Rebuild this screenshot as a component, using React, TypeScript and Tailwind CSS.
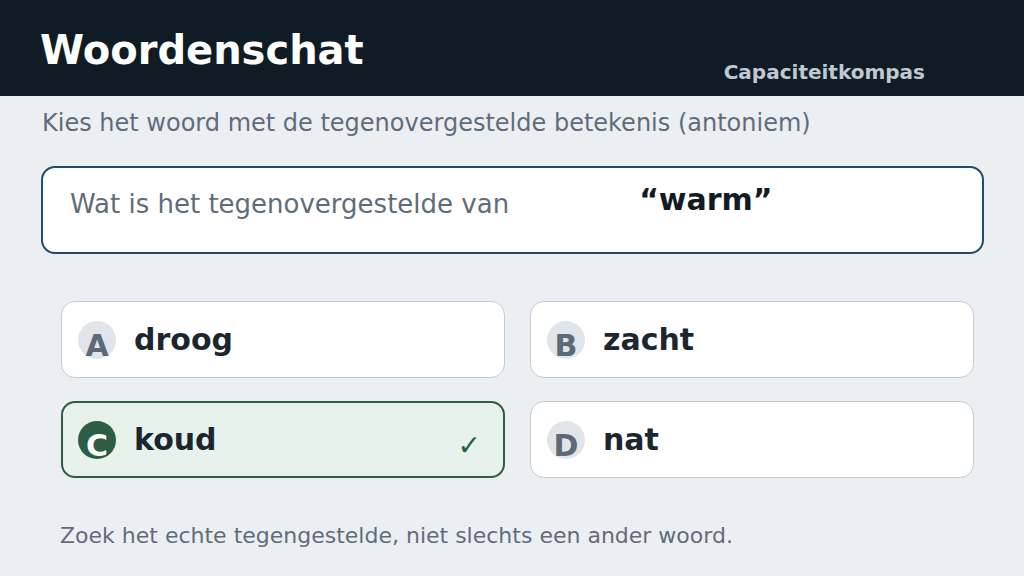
import React from "react";

interface Option {
    letter: string;
    word: string;
    correct?: boolean;
}

const options: Option[] = [
    { letter: "A", word: "droog" },
    { letter: "B", word: "zacht" },
    { letter: "C", word: "koud", correct: true },
    { letter: "D", word: "nat" },
];

function OptionCard({ letter, word, correct }: Option) {
    return (
        <div
            className={
                correct
                    ? "flex items-center h-[77px] rounded-[14px] border-2 border-[#2c5d45] bg-[#e8f2ec] pl-[15px] pr-[22px]"
                    : "flex items-center h-[77px] rounded-[14px] border-[1.5px] border-[#c3ccd5] bg-white pl-[16px] pr-[22px]"
            }
        >
            <div
                className={
                    correct
                        ? "flex justify-center items-start w-[38px] h-[38px] rounded-full bg-[#2c5d45] pt-[10px] shrink-0"
                        : "flex justify-center items-start w-[38px] h-[38px] rounded-full bg-[#e1e5e9] pt-[10px] shrink-0"
                }
            >
                <span
                    className={
                        correct
                            ? "text-[30px] leading-[30px] font-bold text-white"
                            : "text-[30px] leading-[30px] font-bold text-[#5b6978]"
                    }
                >
                    {letter}
                </span>
            </div>
            <span className="ml-[18px] text-[30px] leading-[36px] font-bold text-[#1b2631]">
                {word}
            </span>
            {correct && (
                <span className="ml-auto mt-[12px] text-[28px] leading-[32px] text-[#2c5d45]">
                    ✓
                </span>
            )}
        </div>
    );
}

export default function App() {
    return (
        <div
            className="w-[1024px] h-[576px] bg-[#eceff2] overflow-hidden"
            style={{ fontFamily: '"DejaVu Sans", sans-serif' }}
        >
            <header className="flex items-start h-[96px] bg-[#0f1c26] pl-10 pt-[30px]">
                <h1 className="text-[40px] leading-[40px] font-bold text-white">
                    Woordenschat
                </h1>
                <span className="ml-auto mr-[99px] mt-[30px] text-[20px] leading-[24px] font-bold text-[#c0c8d1]">
                    Capaciteitkompas
                </span>
            </header>

            <p className="mt-[12px] pl-[42px] text-[24px] leading-[30px] text-[#5f6d7b]">
                Kies het woord met de tegenovergestelde betekenis (antoniem)
            </p>

            <div className="mt-[28px] ml-[41px] w-[943px] h-[88px] flex items-start rounded-[14px] border-2 border-[#1f4e6b] bg-white px-[27px] pt-[14px]">
                <span className="mt-[6px] text-[26px] leading-[32px] text-[#5f6d7b]">
                    Wat is het tegenovergestelde van
                </span>
                <span className="ml-[130px] text-[30px] leading-[36px] font-bold text-[#0f1c26]">
                    “warm”
                </span>
            </div>

            <div className="mt-[47px] ml-[61px] w-[913px] grid grid-cols-2 gap-x-[25px] gap-y-[23px]">
                {options.map((o) => (
                    <OptionCard key={o.letter} {...o} />
                ))}
            </div>

            <p className="mt-[44px] pl-[60px] text-[22px] leading-[28px] text-[#5f6d7b]">
                Zoek het echte tegengestelde, niet slechts een ander woord.
            </p>
        </div>
    );
}
